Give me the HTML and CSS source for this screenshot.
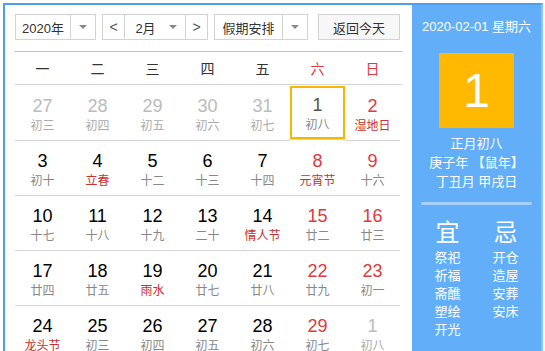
FILE: index.html
```html
<!DOCTYPE html>
<html lang="zh-CN">
  <head>
    <meta charset="UTF-8" />
    <title>万年历</title>
    <link rel="stylesheet" href="styles.css">
  </head>
  <body>
    <div class="calendar">
      <div class="left">
        <div class="tools">
          <div class="select sel-year"><span class="val">2020年</span><span class="arrow"></span></div>
          <div class="month-group">
            <span class="nav">&lt;</span>
            <div class="sel-month"><span class="val">2月</span><span class="arrow"></span></div>
            <span class="nav">&gt;</span>
          </div>
          <div class="select sel-holiday"><span class="val">假期安排</span><span class="arrow"></span></div>
          <button class="btn-today">返回今天</button>
        </div>

        <div class="week">
          <span>一</span><span>二</span><span>三</span><span>四</span><span>五</span>
          <span class="red">六</span><span class="red">日</span>
        </div>

        <div class="days">
          <div class="day other"><b>27</b><i>初三</i></div>
          <div class="day other"><b>28</b><i>初四</i></div>
          <div class="day other"><b>29</b><i>初五</i></div>
          <div class="day other"><b>30</b><i>初六</i></div>
          <div class="day other"><b>31</b><i>初七</i></div>
          <div class="day today"><b>1</b><i>初八</i></div>
          <div class="day weekend"><b>2</b><i class="fest">湿地日</i></div>

          <div class="day"><b>3</b><i>初十</i></div>
          <div class="day"><b>4</b><i class="fest">立春</i></div>
          <div class="day"><b>5</b><i>十二</i></div>
          <div class="day"><b>6</b><i>十三</i></div>
          <div class="day"><b>7</b><i>十四</i></div>
          <div class="day weekend"><b>8</b><i class="fest">元宵节</i></div>
          <div class="day weekend"><b>9</b><i>十六</i></div>

          <div class="day"><b>10</b><i>十七</i></div>
          <div class="day"><b>11</b><i>十八</i></div>
          <div class="day"><b>12</b><i>十九</i></div>
          <div class="day"><b>13</b><i>二十</i></div>
          <div class="day"><b>14</b><i class="fest">情人节</i></div>
          <div class="day weekend"><b>15</b><i>廿二</i></div>
          <div class="day weekend"><b>16</b><i>廿三</i></div>

          <div class="day"><b>17</b><i>廿四</i></div>
          <div class="day"><b>18</b><i>廿五</i></div>
          <div class="day"><b>19</b><i class="fest">雨水</i></div>
          <div class="day"><b>20</b><i>廿七</i></div>
          <div class="day"><b>21</b><i>廿八</i></div>
          <div class="day weekend"><b>22</b><i>廿九</i></div>
          <div class="day weekend"><b>23</b><i>初一</i></div>

          <div class="day"><b>24</b><i class="fest">龙头节</i></div>
          <div class="day"><b>25</b><i>初三</i></div>
          <div class="day"><b>26</b><i>初四</i></div>
          <div class="day"><b>27</b><i>初五</i></div>
          <div class="day"><b>28</b><i>初六</i></div>
          <div class="day weekend"><b>29</b><i>初七</i></div>
          <div class="day other"><b>1</b><i>初八</i></div>
        </div>
      </div>

      <div class="right">
        <p class="date">2020-02-01 星期六</p>
        <div class="big-day">1</div>
        <p class="lunar">正月初八</p>
        <p class="lunar">庚子年 【鼠年】</p>
        <p class="lunar">丁丑月 甲戌日</p>
        <div class="line"></div>
        <div class="yiji">
          <div class="col">
            <h3>宜</h3>
            <span>祭祀</span><span>祈福</span><span>斋醮</span><span>塑绘</span><span>开光</span>
          </div>
          <div class="col">
            <h3>忌</h3>
            <span>开仓</span><span>造屋</span><span>安葬</span><span>安床</span>
          </div>
        </div>
      </div>
    </div>
  </body>
</html>
```

FILE: styles.css
```css
* {
    margin: 0;
    padding: 0;
    box-sizing: border-box;
}

body {
    font-family: "Liberation Sans", "Noto Sans CJK SC", sans-serif;
    background: #fff;
    overflow: hidden;
}

.calendar {
    display: flex;
    margin: 3px 0 0 3px;
    width: 540px;
    height: 370px;
    border-top: 2px solid #4e9ef0;
    border-left: 2px solid #4e9ef0;
    border-right: 2px solid #8cc4fa;
}

.left {
    width: 407px;
    padding: 9px 10px 0 10px;
    background: #fff;
}

.tools {
    display: flex;
    height: 26px;
    margin-bottom: 11px;
    font-size: 13px;
    color: #333;
}

.select,
.sel-month,
.nav,
.btn-today {
    display: flex;
    align-items: center;
    height: 26px;
    border: 1px solid #d3d3d3;
    background: #fff;
}

.val {
    flex: 1;
    text-align: center;
}

.arrow {
    display: flex;
    justify-content: center;
    align-items: center;
    width: 25px;
    height: 100%;
    border-left: 1px solid #d3d3d3;
}

.arrow::after {
    content: "";
    border-left: 4px solid transparent;
    border-right: 4px solid transparent;
    border-top: 4px solid #888;
}

.sel-year {
    width: 81px;
}

.month-group {
    display: flex;
    margin-left: 6px;
}

.nav {
    justify-content: center;
    width: 23px;
    color: #555;
    font-size: 14px;
}

.sel-month {
    width: 60px;
    border-left: none;
    border-right: none;
}

.sel-month .val {
    padding-left: 6px;
}

.sel-month .arrow {
    border-left: none;
}

.sel-holiday {
    width: 94px;
    margin-left: 6px;
}

.btn-today {
    justify-content: center;
    width: 82px;
    margin-left: 10px;
    background: #f7f7f7;
    font-family: inherit;
    font-size: 13px;
    color: #333;
}

.week {
    display: grid;
    grid-template-columns: repeat(7, 55px);
    height: 34px;
    border-top: 1px solid #a9c4d9;
    border-bottom: 1px solid #d5d5d5;
    align-items: center;
    text-align: center;
    font-size: 14px;
    color: #333;
}

.week .red {
    color: #e0393e;
}

.days {
    display: grid;
    grid-template-columns: repeat(7, 55px);
}

.day {
    display: flex;
    flex-direction: column;
    align-items: center;
    height: 55px;
    padding-top: 8px;
    border: 2px solid transparent;
    box-shadow: 0 1px 0 #d5d5d5;
}

.day b {
    font-weight: normal;
    font-size: 18px;
    line-height: 22px;
    color: #000;
}

.day i {
    font-style: normal;
    font-size: 12px;
    line-height: 16px;
    margin-top: 1px;
    color: #888;
}

.day.weekend b {
    color: #e0393e;
}

.day i.fest {
    color: #cc2f2f;
}

.day.other b {
    color: #bbb;
}

.day.other i {
    color: #aaa;
}

.day.today {
    border-color: #f5b700;
    margin: 1px 0;
    height: 53px;
    padding-top: 6px;
}

.day.today b {
    color: #555;
}

.right {
    width: 129px;
    background: #62aef8;
    color: #fff;
    text-align: center;
}

.date {
    margin-top: 13px;
    font-size: 13px;
    line-height: 18px;
}

.big-day {
    width: 75px;
    height: 75px;
    margin: 17px auto 6px;
    background: #ffb900;
    font-size: 48px;
    line-height: 75px;
}

.lunar {
    font-size: 13px;
    line-height: 19px;
}

.line {
    height: 3px;
    margin: 11px 9px 13px;
    border-radius: 2px;
    background: #a6d0fb;
}

.yiji {
    display: flex;
    justify-content: center;
    gap: 1px;
}

.col {
    display: flex;
    flex-direction: column;
    width: 57px;
}

.col h3 {
    font-weight: normal;
    font-size: 24px;
    line-height: 30px;
    margin-bottom: 1px;
}

.col span {
    font-size: 13px;
    line-height: 18px;
}
```
